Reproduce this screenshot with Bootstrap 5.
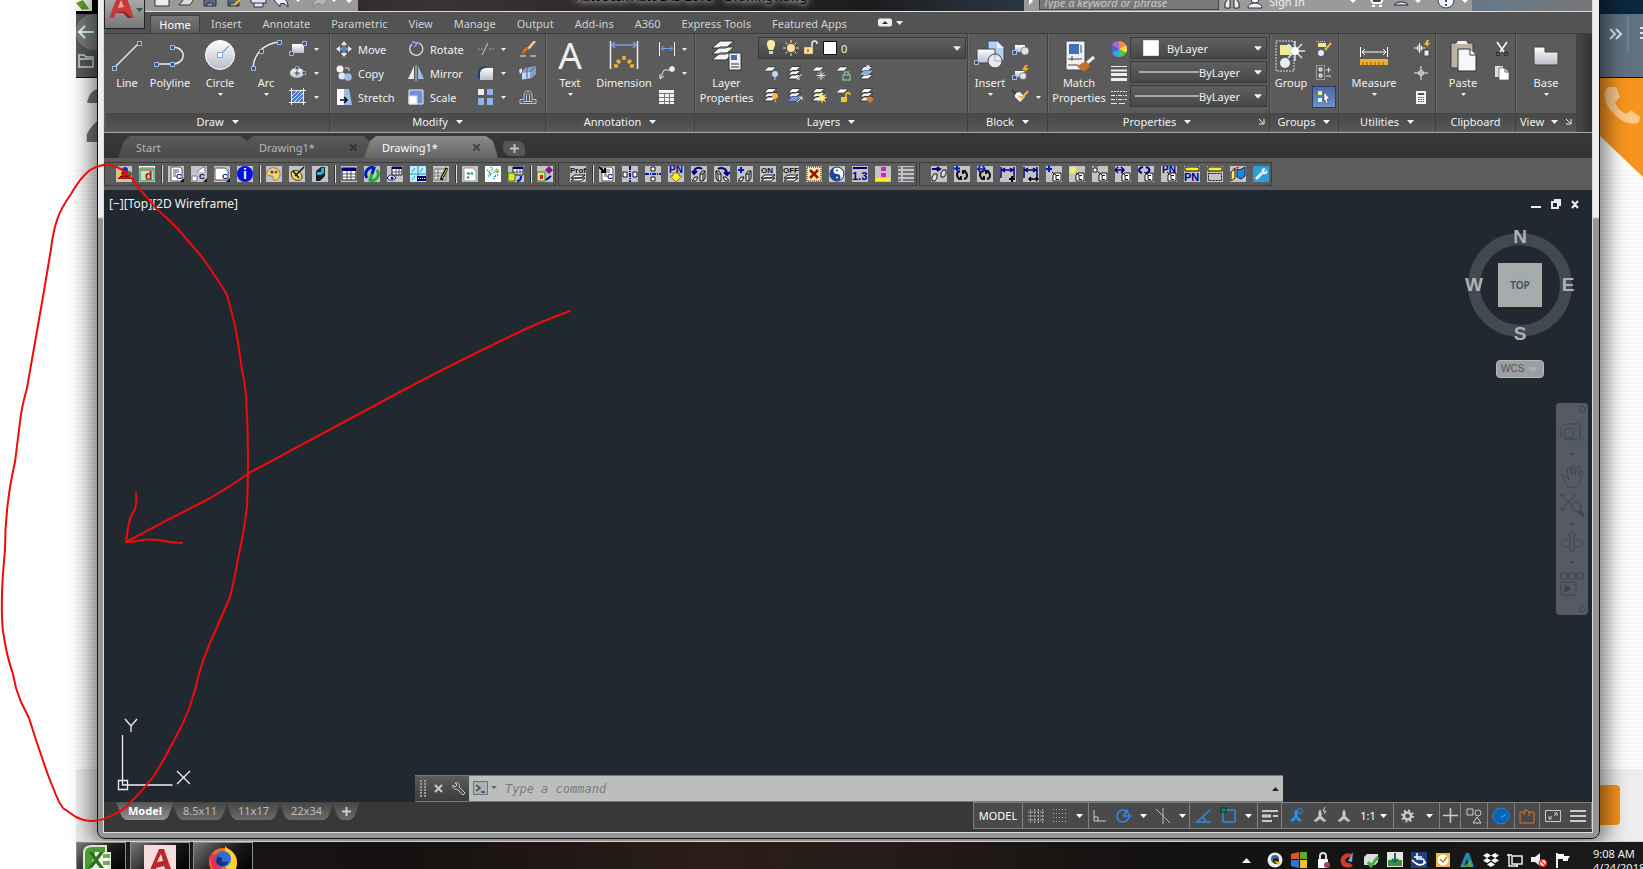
<!DOCTYPE html>
<html lang="en">
<head>
<meta charset="utf-8">
<title>Autodesk AutoCAD 2018 - Drawing1.dwg</title>
<meta name="viewport" content="width=device-width, initial-scale=1">
<link rel="stylesheet" href="https://cdn.jsdelivr.net/npm/bootstrap@5.3.0/dist/css/bootstrap.min.css">
<style>
:root{--ink:#f1f1f1;--canvas:#212830;--bar:#383838;--panel:#5b5b5b;--dark:#3d3d3d}
body{font:11px/15px "Noto Sans","Open Sans",sans-serif;color:var(--ink);background:#fff;height:100vh;overflow:hidden}
button{background:none;border:0;padding:0;color:inherit;font:inherit}
svg{display:block;flex:none}
select{appearance:none;border:0;background:transparent;color:inherit;font:inherit;min-width:0;padding:0}
select option{color:#222}
/* page behind the CAD window */
.backdrop{margin-left:76px;background:repeating-linear-gradient(#fff 0 2px,#f8f8f8 2px 4px)}
.bk-top{height:14px;background:linear-gradient(90deg,#000 0 40%,#0b2740 90%)}
.bk-nav{height:64px;background:linear-gradient(90deg,#5a5b5b 0 50%,#60717f 95%);border-bottom:1px solid #111}
.bk-page{height:90px;background:#fff;color:#777;font:700 78px/74px "Liberation Sans",sans-serif}
.bk-foot{height:72px;background:#ededed}
.peek{width:21px;overflow:hidden}
.corner{width:43px;height:99px;background:#f7941d;clip-path:polygon(0 0,100% 0,100% 100%,0 58px)}
.orange{width:40px;height:40px;background:#f7941d;border-radius:0 4px 4px 0;margin-right:23px}
.round-back{width:36px;height:36px;border-radius:50%;background:#7d7e7e}
/* the window */
.cad{position:absolute;left:21px;right:43px;top:-10px;bottom:2px;border:1px solid #111;border-radius:8px;background:linear-gradient(#eee 0 226px,#959595 228px);padding:9px 7px 6px 6px;box-shadow:0 0 22px 6px rgba(0,0,0,.55)}
.inner{background:var(--bar);outline:1px solid #ddd}
.head{height:33px;background:#535353}
.logo{width:41px;height:29px;background:linear-gradient(#aaa,#777);border:1px solid #222;border-top:0}
.titlebar{height:12px;background:linear-gradient(90deg,#1b1b1b,#3a3236 20%,#1c1c1e 50%,#27303a 58%,#6a7a86 94%,#777);border-bottom:1px solid #ddd;overflow:hidden}
.qat,.info{background:#9a9a9a;height:11px}
.titletext{color:#050505;font-size:12px;line-height:14px;margin-top:-10px;text-shadow:0 0 5px #ccc,0 0 8px #bbb,0 0 10px #aaa}
.kw{width:180px;height:14px;margin-top:-4px;border:1px solid #444;background:#787878;color:#ddd;font:italic 11px/14px "Noto Sans",sans-serif;padding:0 3px}
.kw::placeholder{color:#c8c8c8;opacity:1}
.rtabs{height:21px;gap:1px}
.rtabs a{color:#d0d0d0;text-decoration:none;line-height:18px;margin-top:3px;padding:0 10px}
.rtabs a.active{color:#fff;background:linear-gradient(#777,#5c5c5c);border:1px solid var(--dark);border-bottom:0;width:50px;padding:0;text-align:center}
.ribbon{background:var(--panel);height:100px;border-top:1px solid var(--dark);border-bottom:1px solid #a5a5a5;padding-left:2px}
.rp{border-right:1px solid #414141;box-shadow:1px 0 #6a6a6a;flex:none}
.rp-body{height:79px;padding-top:3px;flex:none}
.rp-title{height:17px;background:linear-gradient(#484848,#555)}
.rest{background:linear-gradient(90deg,#474747,#333)}
.big{padding-top:3px;display:flex;flex-direction:column;align-items:center;flex:none;line-height:15px}
.big svg:first-child{margin-bottom:3px;overflow:visible}
.big .car{margin-top:3px}
.row24{height:24px;display:flex;align-items:center}
.split{gap:6px}
.sm{display:flex;align-items:center;gap:6px;height:22px}
.combo{border:1px solid #3a3a3a;background:linear-gradient(#5f5f5f,#484848);height:22px;display:flex;align-items:center;padding:0 4px}
.hot{width:24px;height:22px;background:linear-gradient(#4a6aa5,#6d92cf);border:1px solid #2a3d66}
.ftabs{height:25px;background:linear-gradient(#383838,#333);padding-left:14px}
.ft{height:22px;width:134px;margin-right:-11px;margin-top:3px;padding:0 18px 0 18px;background:linear-gradient(#5a5a5a,#4a4a4a);clip-path:polygon(12px 0,calc(100% - 12px) 0,calc(100% - 5px) 5px,100% 100%,0 100%,6px 5px);color:#b5b5b5}
.ft.active{background:linear-gradient(#8a8a8a,#666);color:#fff;position:relative}
.plus{width:22px;height:15px;background:#565656;border-radius:4px 8px 2px 8px}
.tools{height:32px;background:#5c5c5c;padding-top:4px}
.tbox{height:24px;border:1px solid #3c3c3c;padding:0 2px 0 11px;gap:7px;align-items:center;display:flex;margin-right:2px}
.tbox button{width:16px;height:16px;background:#c3c3c3;color:#000}
.vl{width:2px;height:18px;background:#ddd;border-left:1px solid #333;margin:0 -2px 0 -1px}
.canvas{background:var(--canvas);position:relative}
.vp{padding:6px 12px 0 5px;font-size:12px}
.cube{position:absolute;right:16px;top:36px;width:112px}
.wcs{width:48px;height:18px;background:#9b9ea3;border:1px solid #b5b8bb;border-radius:4px;color:#555;font:10px/14px "Liberation Sans",sans-serif;padding-left:4px;margin-top:14px}
.navwrap{position:absolute;right:4px;top:213px;width:32px;height:212px;background:#565b61;border-radius:4px;color:#3f444a}
.cmd{position:absolute;left:20.9%;right:20.75%;bottom:0;height:27px;background:#bcbebe;border-top:1px solid #777;border-bottom:1px solid #777}
.cmd-grip{width:54px;background:linear-gradient(#5c5c5c,#3c3c3c);padding-left:5px}
.cmd input{border:0;background:none;font:italic 12px/24px "DejaVu Sans Mono",monospace;color:#444;outline:0;padding:0}
.cmd input::placeholder{color:#797b7b;opacity:1}
.bottom{height:30px;background:var(--bar)}
.lt{height:18px;background:linear-gradient(#454545,#6a6a6a);color:#bbb;clip-path:polygon(0 0,100% 0,calc(100% - 6px) 85%,calc(100% - 10px) 100%,10px 100%,6px 85%);line-height:16px;text-align:center;margin-left:-2px}
.lt.active{background:linear-gradient(#555,#929292);color:#fff;font-weight:700}
.sb{border:1px solid #808080;height:27px;background:#4a4a4a;display:flex;align-items:center;justify-content:center;color:#c4c4c4;margin-left:-1px}
.taskbar{height:28px;margin-left:76px;border-top:1px solid #c5d5de;background:linear-gradient(90deg,#1c1a19,#141110 20%,#2b1d18 40%,#271c1a 50%,#121110 70%,#1a1a1a)}
.app{height:28px;border:1px solid #8c8c8c;border-bottom:0;background:linear-gradient(135deg,#777,#1a1a1a 55%,#000);display:flex;justify-content:center;align-items:flex-start;padding-top:2px}
.clock{width:50px;line-height:14px;padding-top:5px;white-space:nowrap}
.redline{position:absolute;left:0;top:0;pointer-events:none}
</style>
</head>
<body>
<svg width="0" height="0" class="position-absolute">
<defs>
<linearGradient id="gw" x2="0" y2="1"><stop stop-color="#fff"/><stop offset="1" stop-color="#b9bcc8"/></linearGradient>
</defs>
<symbol id="car" viewBox="0 0 7 4"><path d="M0 0h7L3.500 4z" fill="currentColor"/></symbol>
<symbol id="nd" viewBox="0 0 5 5"><path d="M.5.5h4v4h-4z" fill="#46526b" stroke="#9dbbf0"/></symbol>
<symbol id="sheet" viewBox="0 0 16 16"><path d="M5 2h8L9 6H1z" fill="#fff" stroke="#333" stroke-width=".7"/></symbol>
<symbol id="stack" viewBox="0 0 16 16"><path d="M5 9.500h9L9 14H1zM5 5.500h9L9 10H1zM5 1.500h9L9 6H1z" fill="#f4f4f4" stroke="#3a3a3a"/></symbol>
<symbol id="person" viewBox="0 0 16 16"><path d="M8 1l1.800 4-.3 3 5 5-3 .8L8 11l-3.500 2.800-3-.8 5-5-.3-3z" fill="currentColor"/></symbol>
<symbol id="tag" viewBox="0 0 16 16"><path d="M7 9l2-2h6v8H7z" fill="#fff" stroke="#111"/><path d="M13 9.500h-3v4h3M6 6l4 3" fill="none" stroke="#111"/></symbol>
<symbol id="rot" viewBox="0 0 16 16"><path d="M6 5C2 6 2 11 6 13M4 13h3v-3M10 13c4-1 4-6 0-8M12 5H9v3" fill="none" stroke="#111" stroke-width="2"/></symbol>
<symbol id="beam" viewBox="0 0 16 16"><path d="M9 8l2-3h3v7l-2 3H9zM9 8h3v7M12 8l2-3M1 15l3-4h3l-2 4z" fill="#ddd" stroke="#111"/></symbol>
</svg>

<div class="vh-100 d-flex flex-column position-relative">
  <div class="backdrop flex-grow-1 d-flex flex-column position-relative">
    <div class="bk-top"><svg width="16" height="11"><path fill="#fff" d="M0 0h16v11H0z"/><path fill="#63a02c" d="M0 3l7-3 6 9-7 1z"/></svg></div>
    <div class="bk-nav d-flex justify-content-between">
      <div>
        <div class="round-back d-flex align-items-center"><svg width="20" height="16" fill="none" stroke="#dff" stroke-width="2"><path d="M18 8H3M9 2L3 8l6 6"/></svg></div>
        <svg width="20" height="20" fill="none" stroke="#cfe0e4" stroke-width="1.500"><path d="M3 17V5h5l2 2h7v10zM3 9h14"/></svg>
      </div>
      <svg width="34" height="40" fill="none" stroke="#cfeaf2" stroke-width="2"><path d="M1 15l5 5-5 5M7 15l5 5-5 5"/><path d="M19 3v34" stroke="#8b99a3" stroke-width="1"/><path d="M31 14h3M31 19h3M31 24h3"/></svg>
    </div>
    <div class="bk-page d-flex justify-content-between"><span class="peek ps-2">2</span>
      <div class="corner"><svg width="43" height="60"><path d="M8 9c-6 5-4 16 5 26s20 13 26 9l1-5-9-7-5 4c-5-2-10-8-11-12l5-5-4-10z" fill="#fbc88a"/></svg></div>
    </div>
    <div class="bk-foot mt-auto d-flex justify-content-end align-items-center"><div class="orange"></div></div>

    <main class="cad d-flex">
      <div class="inner flex-grow-1 d-flex flex-column">
        <header class="head d-flex">
          <button class="logo flex-shrink-0 d-flex" aria-label="Application menu"><svg width="40" height="28"><path d="M4 18L13-5h8l8 23h-6l-3-7-9 2-2 5z" fill="#c93a37"/><path d="M13 8l3-8 3 7z" fill="#e9aaa7"/><path d="M10 13l9-2 8 7-4 0-5-5z" fill="#8d1d20"/><path d="M31 8h7l-3.500 4z" fill="#2e5b58"/></svg></button>
          <div class="flex-grow-1">
            <div class="titlebar d-flex justify-content-between">
              <div class="qat d-flex align-items-start ps-2" style="width:213px">
                <svg width="204" height="10" fill="none" stroke="#333"><path d="M2-3v9h14v-9" fill="#eee"/><path d="M26 5l5-6h10l-4 6z" fill="#ddd"/><path d="M51-3v9h12v-9zM54 6V3h6v3" fill="#556b88"/><path d="M75-3v9h11v-9zM77 6V3h5v3" fill="#556b88"/><path d="M81 5l6-5" stroke="#f0c030" stroke-width="2"/><path d="M98-1h15v4H98zM101 3v4h9V3" fill="#dde6f5"/><path d="M121 0l6-6v4c5 0 8 3 8 9-3-4-5-4-8-3v3z" fill="#e8f0ff"/><path d="M174 0l-6-6v4c-5 0-8 3-8 9 3-4 5-4 8-3v3z" fill="#b5b5b5" stroke="#888"/><path d="M142-1h6l-3 3zM178-1h6l-3 3zM192-1h8l-4 4z" fill="#fff" stroke="none"/></svg>
              </div>
              <div class="titletext">Autodesk AutoCAD 2018 &nbsp;&nbsp; Drawing1.dwg</div>
              <div class="d-flex">
              <div class="info d-flex align-items-start" style="width:448px">
                <svg width="15" height="10"><path d="M5-3v8l4-4z" fill="#fff"/></svg>
                <input class="kw" aria-label="Search" placeholder="Type a keyword or phrase">
                <svg width="50" height="10"><path d="M6 8V3l3-4h2v9zM20 8V3l-3-4h-2v9z" fill="#eee" stroke="#222"/><path d="M29 8c0-4 5-5 7-5s7 1 7 5z" fill="#eef" stroke="#333"/><circle cx="36" cy="-1" r="4" fill="#fff" stroke="#333"/></svg>
                <span style="margin-top:-6px">Sign In</span>
                <svg width="158" height="10" class="ms-auto"><path d="M36 0h6l-3 3zM101 0h6l-3 3zM148 0h6l-3 3z" fill="#fff"/><path d="M56-2l3 5h8l2-5zM58 6h3M65 6h3" stroke="#fff" stroke-width="2" fill="#445"/><path d="M80 5c3-4 12-4 14 0zM83-1h7" fill="#dde6f5" stroke="#223"/><circle cx="132" cy="0" r="8" fill="#f5f5f5" stroke="#345"/><path d="M132 4v2M132-2v4" stroke="#24508f" stroke-width="2"/></svg>
              </div>
              <div style="width:120px"></div>
              </div>
            </div>
            <nav class="rtabs d-flex" style="padding-left:5px" aria-label="Ribbon tabs">
              <a href="#" class="active">Home</a><a href="#">Insert</a><a href="#">Annotate</a><a href="#">Parametric</a><a href="#">View</a><a href="#">Manage</a><a href="#">Output</a><a href="#">Add-ins</a><a href="#">A360</a><a href="#">Express Tools</a><a href="#">Featured Apps</a>
              <button class="ms-3 ps-1 d-flex align-items-center gap-1" aria-label="Minimize ribbon"><svg width="14" height="9"><rect width="14" height="8" y=".5" rx="2" fill="#eee"/><path d="M4 6l3-3 3 3z" fill="#333"/></svg><svg width="7" height="4"><use href="#car"/></svg></button>
            </nav>
          </div>
        </header>

        <section class="ribbon d-flex">
          <!-- Draw -->
          <div class="rp" style="width:224px">
            <div class="rp-body d-flex">
              <button class="big" style="width:42px"><svg width="32" height="32"><path d="M3 28L28 3" stroke="#eee" stroke-width="1.500"/><use href="#nd" x="1" y="26" width="5" height="5"/><use href="#nd" x="26" y="1" width="5" height="5"/></svg>Line</button>
              <button class="big" style="width:44px"><svg width="32" height="32" fill="none"><path d="M2 24h16c15 0 15-17 0-17" stroke="#eee" stroke-width="1.500"/><use href="#nd" x="0" y="22" width="5" height="5"/><use href="#nd" x="16" y="22" width="5" height="5"/><use href="#nd" x="16" y="5" width="5" height="5"/></svg>Polyline</button>
              <button class="big" style="width:56px"><svg width="32" height="32"><circle cx="16" cy="15" r="14.500" fill="url(#gw)" stroke="#fff"/><path d="M16 15l9-9" stroke="#79a3e8" stroke-width="1.500"/><path d="M13.500 12.500h5v5h-5z" fill="#fff" stroke="#79a3e8"/></svg>Circle<svg class="car" width="5" height="3"><use href="#car"/></svg></button>
              <button class="big" style="width:36px"><svg width="32" height="32" fill="none"><path d="M3 28C4 14 13 4 29 2" stroke="#eee" stroke-width="1.500"/><use href="#nd" x="1" y="26" width="5" height="5"/><use href="#nd" x="9" y="9" width="5" height="5"/><use href="#nd" x="27" y="0" width="5" height="5"/></svg>Arc<svg class="car" width="5" height="3"><use href="#car"/></svg></button>
              <div class="ms-1">
                <button class="row24 split" aria-label="Rectangle"><svg width="20" height="16"><path d="M4 3h12v9H4z" fill="url(#gw)"/><use href="#nd" x="14" y="0" width="5" height="5"/><use href="#nd" x="1" y="10" width="5" height="5"/></svg><svg width="5" height="3"><use href="#car"/></svg></button>
                <button class="row24 split" aria-label="Ellipse"><svg width="20" height="16"><ellipse cx="9" cy="8" rx="7" ry="5" fill="url(#gw)"/><path d="M9 5.500v5M6.500 8h5" stroke="#345"/><use href="#nd" x="7" y="1" width="4" height="4"/><use href="#nd" x="14" y="6" width="4" height="4"/></svg><svg width="5" height="3"><use href="#car"/></svg></button>
                <button class="row24 split" aria-label="Hatch"><svg width="20" height="18"><path d="M4 3h11v11H4z" fill="#4e78c6"/><path d="M4 8l5-5M4 12l9-9M6 14l9-9M10 14l5-5" stroke="#dbe8ff"/><path d="M1 2.500h17M1 14.500h17M3.500 0v17M15.500 0v17" stroke="#eee"/></svg><svg width="5" height="3"><use href="#car"/></svg></button>
              </div>
            </div>
            <button class="rp-title w-100 d-flex justify-content-center align-items-center gap-2">Draw <svg width="7" height="4"><use href="#car"/></svg></button>
          </div>
          <!-- Modify -->
          <div class="rp" style="width:216px">
            <div class="rp-body d-flex" style="padding-left:6px">
              <div style="width:72px">
                <div class="row24"><button class="sm"><svg width="16" height="16" fill="#eee"><path d="M8 0l3 4H5zM8 16l3-4H5zM0 8l4-3v6zM16 8l-4-3v6z"/><path d="M8 3v10M3 8h10" stroke="#9cf"/><path d="M6 6h4v4H6z" fill="#5b7fc0"/></svg>Move</button></div>
                <div class="row24"><button class="sm"><svg width="16" height="16"><circle cx="4" cy="4" r="3.500" fill="#f4f4f4"/><circle cx="6" cy="11" r="3.500" fill="#dce6f8"/><circle cx="12" cy="12" r="3.800" fill="#9dbbe8"/><path d="M9 3h4v3" fill="none" stroke="#ddd"/></svg>Copy</button></div>
                <div class="row24"><button class="sm"><svg width="16" height="16"><path d="M8 0h5l3 16H8z" fill="#9dbbe8"/><path d="M1 0h7v16H1z" fill="#fff"/><path d="M4 11h7M8 8l3 3-3 3" stroke="#000" fill="none" stroke-width="1.500"/></svg>Stretch</button></div>
              </div>
              <div style="width:69px">
                <div class="row24"><button class="sm"><svg width="16" height="16" fill="none" stroke="#ddd" stroke-width="1.300"><path d="M4 3a6.500 6.500 0 1 0 7-1"/><path d="M4 1l6 1-4 4" stroke="#8ab0f0"/></svg>Rotate</button></div>
                <div class="row24"><button class="sm"><svg width="16" height="16"><path d="M6 1v13H0z" fill="#e8e8e8"/><path d="M10 1v13h6z" fill="#9dbbe8"/><path d="M8 0v16" stroke="#ccc"/></svg>Mirror</button></div>
                <div class="row24"><button class="sm"><svg width="16" height="16"><path d="M1 1h14v14H1z" fill="#6d93d6" stroke="#eee"/><path d="M1 7h8v8H1z" fill="#fff" stroke="#cfd9ee"/></svg>Scale</button></div>
              </div>
              <div style="width:42px">
                <button class="row24 split" aria-label="Trim"><svg width="18" height="16" fill="none" stroke="#7aa2e6"><path d="M1 8h5M12 8h5" stroke-dasharray="2 1"/><path d="M5 14l6-12" stroke="#ccc"/></svg><svg width="5" height="3"><use href="#car"/></svg></button>
                <button class="row24 split" aria-label="Fillet"><svg width="18" height="16"><path d="M3 15V9c0-4 3-6 6-6h7v12z" fill="url(#gw)"/><path d="M2 14V8c0-4 3-6 7-6" fill="none" stroke="#24426e" stroke-width="2"/></svg><svg width="5" height="3"><use href="#car"/></svg></button>
                <button class="row24 split" aria-label="Array"><svg width="18" height="16"><path d="M1 0h6v6H1z" fill="#eee"/><path d="M10 0h6v6h-6zM1 9h6v7H1zM10 9h6v7h-6z" fill="#8fb0ea"/></svg><svg width="5" height="3"><use href="#car"/></svg></button>
              </div>
              <div>
                <button class="row24" aria-label="Erase"><svg width="18" height="16"><path d="M1 15h6M11 15h6" stroke="#eee"/><path d="M16 0L9 8" stroke="#f7d27a" stroke-width="2.500"/><path d="M10 7l-7 7 1-5 3-3z" fill="#e2711d"/></svg></button>
                <button class="row24" aria-label="Explode"><svg width="18" height="16"><path d="M3 7l3-4 11-2v8l-4 4-10 2z" fill="#7fa2cf"/><path d="M3 8l8-1v6l-8 1z" fill="#c5d7ee"/><path d="M11 7l5-5M8 3v10" stroke="#4a5e7a"/><path d="M0 5l3-2v4l-2 2z" fill="#dce8f8"/></svg></button>
                <button class="row24" aria-label="Offset"><svg width="18" height="16" fill="none" stroke="#a9c4f0"><path d="M1 14.500h16v-4h-4v-4c0-6-8-6-8 0v4H1zM4 12.500h10M7.500 12V6c0-2 3-2 3 0v6"/></svg></button>
              </div>
            </div>
            <button class="rp-title w-100 d-flex justify-content-center align-items-center gap-2">Modify <svg width="7" height="4"><use href="#car"/></svg></button>
          </div>
          <!-- Annotation -->
          <div class="rp" style="width:149px">
            <div class="rp-body d-flex">
              <button class="big" style="width:48px"><svg width="32" height="32"><text x="16" y="29" text-anchor="middle" font-size="37" font-family="Noto Sans" fill="#eee">A</text></svg>Text<svg class="car" width="5" height="3"><use href="#car"/></svg></button>
              <button class="big" style="width:60px"><svg width="32" height="32"><path d="M2.500 1v28M29.500 1v28" stroke="#eee" stroke-width="1.500"/><path d="M4 5h24M7 2L4 5l3 3M25 2l3 3-3 3" stroke="#74a0ea" stroke-width="1.500" fill="none"/><path d="M6 26h4M9 20l3 3M16 16v4M23 20l-3 3M22 26h4" stroke="#f0ac2c" stroke-width="3.500"/></svg>Dimension</button>
              <div class="ms-1">
                <button class="row24 split" aria-label="Linear dimension"><svg width="18" height="16" fill="none"><path d="M1.500 1v14M16.500 1v14" stroke="#eee"/><path d="M3 7.500h12M6 5L3 7.500 6 10M12 5l3 2.500-3 2.500" stroke="#74a0ea"/></svg><svg width="5" height="3"><use href="#car"/></svg></button>
                <button class="row24 split" aria-label="Leader"><svg width="18" height="16" fill="none" stroke="#ddd"><path d="M2 14L6 5h6M2 9v5l4-3"/><circle cx="14" cy="4" r="2.500" fill="#eee"/></svg><svg width="5" height="3"><use href="#car"/></svg></button>
                <button class="row24" aria-label="Table"><svg width="18" height="16"><path d="M1 1h15v14H1z" fill="#f2f2f2"/><path d="M1 4.500h15M1 8.500h15M1 12.500h15M6.500 4v11M11.500 4v11" stroke="#777"/></svg></button>
              </div>
            </div>
            <button class="rp-title w-100 d-flex justify-content-center align-items-center gap-2">Annotation <svg width="7" height="4"><use href="#car"/></svg></button>
          </div>
          <!-- Layers -->
          <div class="rp" style="width:273px">
            <div class="rp-body d-flex">
              <button class="big" style="width:63px"><svg width="32" height="32"><path d="M9 13h14l-8 7H1zM9 7h14l-8 7H1zM9 1h14l-8 7H1z" fill="#f4f4f4" stroke="#333"/><path d="M18 13h12v17H18z" fill="#eef1f5" stroke="#333"/><path d="M20 15h6v5h-6z" fill="#3f6fb5"/><path d="M20 24h8M20 27h8" stroke="#333"/></svg>Layer<br>Properties</button>
              <div>
                <div class="combo gap-1" style="width:208px">
                  <svg width="16" height="18"><path d="M8 1c5 0 5 5 2 10H6C3 6 3 1 8 1z" fill="#fde9a6"/><path d="M6 12h4v3H6z" fill="#d6d0bd"/></svg>
                  <svg width="16" height="16"><circle cx="8" cy="8" r="4" fill="#fbdf9c"/><path d="M8 0v3M8 13v3M0 8h3M13 8h3M2.500 2.500l2 2M11.500 11.500l2 2M13.500 2.500l-2 2M4.500 11.500l-2 2" stroke="#f3e3bd"/></svg>
                  <svg width="16" height="16"><path d="M1 7h9v7H1z" fill="#fbe3a0" stroke="#8a6a1a" stroke-width=".5"/><path d="M9 7V4c0-4 5-4 5 0" fill="none" stroke="#eee" stroke-width="1.500"/><path d="M5 9v3" stroke="#333"/></svg>
                  <svg width="14" height="14"><path d="M.5.5h13v13H.5z" fill="#fff" stroke="#111"/></svg>
                  <select class="flex-grow-1" aria-label="Layer"><option>0</option></select>
                  <svg width="8" height="5"><use href="#car"/></svg>
                </div>
                <div class="d-flex mt-1" style="gap:8px;padding-left:5px;height:20px">
                  <button aria-label="Off"><svg width="16" height="16"><use href="#sheet"/><circle cx="12" cy="9" r="3" fill="#bcd6f5"/><path d="M12 12v3" stroke="#bcd6f5"/></svg></button>
                  <button aria-label="Isolate"><svg width="16" height="16"><use href="#stack"/><path d="M15 9l-5 5M10 11v3h3" stroke="#eee" fill="none"/></svg></button>
                  <button aria-label="Freeze"><svg width="16" height="16"><use href="#sheet"/><path d="M10 6v9M5.500 10.500h9M7 7.500l6 6M13 7.500l-6 6" stroke="#cfe4ff"/></svg></button>
                  <button aria-label="Lock"><svg width="16" height="16"><use href="#sheet"/><path d="M8 10h7v5H8zM9.500 10V7h4v3" fill="none" stroke="#7fb49a" stroke-width="1.500"/></svg></button>
                  <button aria-label="Make current"><svg width="16" height="16"><use href="#stack"/><path d="M5 5.500h9L9 10H1z" fill="#8db0e8"/><circle cx="9" cy="2" r="2" fill="#cde"/></svg></button>
                </div>
                <div class="d-flex" style="gap:8px;padding:4px 0 0 5px">
                  <button aria-label="All on"><svg width="16" height="16"><use href="#stack"/><circle cx="12" cy="9" r="3" fill="#f7b43c"/><path d="M12 12v3" stroke="#f7b43c"/></svg></button>
                  <button aria-label="Unisolate"><svg width="16" height="16"><use href="#stack"/><path d="M5 9.500h9L9 14H1z" fill="#6e92da"/><path d="M10 15l5-5M12 10h3v3" stroke="#eee" fill="none"/></svg></button>
                  <button aria-label="Thaw all"><svg width="16" height="16"><use href="#stack"/><path d="M11 5v11M6 10.500h10M7 7l8 8M15 7l-8 8" stroke="#ffd93b"/><circle cx="11" cy="11" r="3" fill="#ffe97a"/></svg></button>
                  <button aria-label="Unlock"><svg width="16" height="16"><use href="#sheet"/><path d="M6 10h6v5H6z" fill="#f7c52c"/><path d="M11 10V8c0-3 4-3 4 0" fill="none" stroke="#f7c52c" stroke-width="1.500"/></svg></button>
                  <button aria-label="Match layer"><svg width="16" height="16"><use href="#stack"/><path d="M7 12l4-3 4 3-4 4z" fill="#d9772a"/></svg></button>
                </div>
              </div>
            </div>
            <button class="rp-title w-100 d-flex justify-content-center align-items-center gap-2">Layers <svg width="7" height="4"><use href="#car"/></svg></button>
          </div>
          <!-- Block -->
          <div class="rp" style="width:80px">
            <div class="rp-body d-flex">
              <button class="big" style="width:44px"><svg width="32" height="32"><path d="M14 1h9l7 7v13H14z" fill="#b3cdf3" stroke="#3b4a63"/><path d="M23 1v7h7" fill="#e8f1ff"/><path d="M3 9h18v14H3z" fill="url(#gw)" stroke="#444"/><circle cx="21" cy="21" r="7" fill="#e5e8ef" stroke="#444"/><path d="M21 21v-6M21 21h6" stroke="#aab"/><use href="#nd" x="0" y="20" width="5" height="5"/></svg>Insert<svg class="car" width="5" height="3"><use href="#car"/></svg></button>
              <div>
                <button class="row24" aria-label="Create block"><svg width="18" height="16"><path d="M3 4h10v7H3z" fill="url(#gw)"/><circle cx="13" cy="10" r="4" fill="#dde3ee" stroke="#555" stroke-width=".6"/><use href="#nd" x="0" y="9" width="5" height="5"/></svg></button>
                <button class="row24" aria-label="Edit block"><svg width="18" height="16"><path d="M3 6h9v6H3z" fill="url(#gw)"/><circle cx="11" cy="11" r="3.500" fill="#dde3ee" stroke="#555" stroke-width=".6"/><path d="M13 0l-3 5h3l-1 3 5-5h-3l2-3z" fill="#f6a62a"/><use href="#nd" x="0" y="10" width="5" height="5"/></svg></button>
                <button class="row24 split" aria-label="Edit attributes"><svg width="18" height="16"><path d="M3 4l5-1 5 5-5 5-5-5z" fill="#eee"/><path d="M16 2l-6 7-3-2" stroke="#e9b84e" stroke-width="2" fill="none"/><path d="M0 1l4 4" stroke="#111"/></svg><svg width="5" height="3"><use href="#car"/></svg></button>
              </div>
            </div>
            <button class="rp-title w-100 d-flex justify-content-center align-items-center gap-2">Block <svg width="7" height="4"><use href="#car"/></svg></button>
          </div>
          <!-- Properties -->
          <div class="rp" style="width:222px">
            <div class="rp-body d-flex">
              <button class="big" style="width:62px"><svg width="32" height="32"><path d="M3 1h19v29H3z" fill="#f0f1f4" stroke="#444"/><path d="M6 4h10v10H6z" fill="#3f6fb5"/><path d="M18 5v8M5 19h14M9 16v5M5 25h10" stroke="#444"/><path d="M31 17l-7 6" stroke="#eee" stroke-width="3"/><path d="M14 26l9-5 4 5-5 5c-3 1-5-2-8-5z" fill="#c46f24"/></svg>Match<br>Properties</button>
              <div style="width:20px;padding-left:1px">
                <div class="row24"><svg width="16" height="16"><circle cx="8" cy="8" r="7.500" fill="#d44"/><path d="M8 8L1 4a8 8 0 0 1 7-4z" fill="#a36bd0"/><path d="M8 8V0a8 8 0 0 1 7 4z" fill="#f18b3c"/><path d="M8 8l7-4a8 8 0 0 1 0 8z" fill="#f4e04b"/><path d="M8 8l7 4a8 8 0 0 1-7 4z" fill="#59c15a"/><path d="M8 8v8a8 8 0 0 1-7-4z" fill="#3aa6d8"/><path d="M8 8l-7 4V4z" fill="#4a63d8"/></svg></div>
                <div class="row24"><svg width="16" height="16" stroke="#eee"><path d="M0 1.500h16"/><path d="M0 5.500h16" stroke-width="2"/><path d="M0 9.500h16M0 14.500h16" stroke-width="3"/></svg></div>
                <div class="row24"><svg width="16" height="16" stroke="#e5e5e5"><path d="M0 2.500h16" stroke-dasharray="2 1"/><path d="M0 6.500h16M0 10.500h16" stroke-dasharray="4 1 1 1"/><path d="M0 14.500h16" stroke-dasharray="6 2"/></svg></div>
              </div>
              <div class="d-flex flex-column" style="width:137px;gap:2px">
                <div class="combo gap-2" style="padding-left:12px"><svg width="16" height="16"><path d="M.5.5h15v15H.5z" fill="#fff" stroke="#ddd"/></svg><select class="flex-grow-1" aria-label="Object color"><option>ByLayer</option></select><svg width="8" height="5"><use href="#car"/></svg></div>
                <div class="combo"  style="padding-left:8px"><svg width="60" height="2"><path d="M0 1h60" stroke="#fff"/></svg><select class="flex-grow-1" aria-label="Lineweight"><option>ByLayer</option></select><svg width="8" height="5"><use href="#car"/></svg></div>
                <div class="combo"><svg width="64" height="2"><path d="M0 1h64" stroke="#fff"/></svg><select class="flex-grow-1" aria-label="Linetype"><option>ByLayer</option></select><svg width="8" height="5"><use href="#car"/></svg></div>
              </div>
            </div>
            <button class="rp-title w-100 d-flex justify-content-center align-items-center gap-2"><span class="ms-auto ps-3">Properties</span> <svg width="7" height="4"><use href="#car"/></svg><svg class="ms-auto me-1" width="7" height="7"><path d="M1 1l4 4M6 1v5H1" stroke="#eee" fill="none"/></svg></button>
          </div>
          <!-- Groups -->
          <div class="rp" style="width:69px">
            <div class="rp-body d-flex">
              <button class="big" style="width:42px"><svg width="32" height="32"><path d="M1 1h18v30H1z" fill="none" stroke="#ddd" stroke-dasharray="2 1"/><path d="M5 5h11v10H5z" fill="#f0ec8e"/><circle cx="10" cy="23" r="5" fill="#e3eef8"/><path d="M20 1v20M10 11h20M13 4l14 14M27 4L13 18" stroke="#cfe6ff" stroke-width="1.500"/><circle cx="20" cy="11" r="4" fill="#fff"/></svg>Group</button>
              <div>
                <button class="row24 justify-content-center" style="width:24px" aria-label="Group edit"><svg width="16" height="16"><path d="M2 2h8v4H2z" fill="#f0ec8e"/><circle cx="5" cy="12" r="3" fill="#e3eef8"/><path d="M0 .5h9" stroke="#ccc" stroke-dasharray="1 1"/><path d="M15 2L9 9" stroke="#e8b64c" stroke-width="2"/></svg></button>
                <button class="row24 justify-content-center" style="width:24px" aria-label="Ungroup"><svg width="16" height="16" stroke="#ddd" fill="none"><path d="M.5.500h8v14h-8z" stroke-dasharray="1 1"/><path d="M3 3h3v3H3zM3 9h3v3H3z" fill="#9bc0ee"/><path d="M10 5h5M12.500 2.500v5M10 11h5"/></svg></button>
                <div class="row24"><button class="hot d-flex align-items-center justify-content-center" aria-label="Group selection"><svg width="14" height="16"><path d="M1 2h4v4H1z" fill="#f0ec8e"/><path d="M1 9h4v4H1z" fill="#dfe"/><path d="M7 3l6 7-3 0 1 4-2 1-1-4-1 1z" fill="#fff" stroke="#333" stroke-width=".6"/></svg></button></div>
              </div>
            </div>
            <button class="rp-title w-100 d-flex justify-content-center align-items-center gap-2">Groups <svg width="7" height="4"><use href="#car"/></svg></button>
          </div>
          <!-- Utilities -->
          <div class="rp" style="width:97px">
            <div class="rp-body d-flex">
              <button class="big" style="width:70px"><svg width="32" height="32"><path d="M2.500 7v10M29.500 7v10M4 12h24M7 9l-3 3 3 3M25 9l3 3-3 3" stroke="#fff" fill="none"/><path d="M2 19h28v6H2z" fill="#efb02d"/><path d="M5 22v3M9 22v3M13 22v3M17 22v3M21 22v3M25 22v3" stroke="#8d5e0c"/></svg>Measure<svg class="car" width="5" height="3"><use href="#car"/></svg></button>
              <div class="ms-1">
                <button class="row24" aria-label="Quick select"><svg width="18" height="18" fill="none" stroke="#eee"><path d="M1 8h11M6.500 3v10M4.500 6h4v4h-4z"/><path d="M11 10h5v6h-5z" fill="#eee" stroke="#444"/><path d="M14 0l-3 5h3l-1 3 4-5h-2l1-3z" fill="#f6b62a" stroke="none"/></svg></button>
                <button class="row24" aria-label="ID point"><svg width="16" height="16" fill="none" stroke="#eee"><path d="M1 8h14M8 1v14"/><circle cx="8" cy="8" r="2.500"/></svg></button>
                <button class="row24" aria-label="Calculator"><svg width="16" height="16"><path d="M3 2h10v13H3z" fill="#f2f2f2"/><path d="M5 4h6v2H5z" fill="#555"/><path d="M5 8.500h6M5 10.500h6M5 12.500h6" stroke="#555" stroke-dasharray="1.500 .8"/></svg></button>
              </div>
            </div>
            <button class="rp-title w-100 d-flex justify-content-center align-items-center gap-2">Utilities <svg width="7" height="4"><use href="#car"/></svg></button>
          </div>
          <!-- Clipboard -->
          <div class="rp" style="width:80px">
            <div class="rp-body d-flex">
              <button class="big" style="width:54px"><svg width="32" height="32"><path d="M4 3h22v25H4z" fill="#bdb2a4" stroke="#3d3a36"/><path d="M9 4l2-3h8l2 3z" fill="#f3f3f3"/><path d="M11 9h12l6 6v16H11z" fill="#f6f7fa" stroke="#333"/><path d="M23 9v6h6" fill="#fff" stroke="#333"/></svg>Paste<svg class="car" width="5" height="3"><use href="#car"/></svg></button>
              <div class="ms-1">
                <button class="row24" aria-label="Cut"><svg width="16" height="16" fill="none"><path d="M3 1l7 10M13 1L6 11" stroke="#fff" stroke-width="1.500"/><circle cx="4" cy="13" r="2" stroke="#222"/><circle cx="12" cy="13" r="2" stroke="#222"/></svg></button>
                <button class="row24" aria-label="Copy clip"><svg width="16" height="16"><path d="M1 1h8v11H1z" fill="#dcdcdc"/><path d="M5 3h6l4 4v8H5z" fill="#fff" stroke="#555" stroke-width=".7"/><path d="M11 3v4h4" fill="none" stroke="#555"/></svg></button>
              </div>
            </div>
            <div class="rp-title d-flex justify-content-center align-items-center">Clipboard</div>
          </div>
          <!-- View -->
          <div class="rp" style="width:61px">
            <div class="rp-body d-flex justify-content-center"><button class="big"><svg width="32" height="32"><path d="M4 7h11v5h13v13H4z" fill="url(#gw)" stroke="#444"/></svg>Base<svg class="car" width="5" height="3"><use href="#car"/></svg></button></div>
            <button class="rp-title w-100 d-flex justify-content-between align-items-center px-1">View <svg width="7" height="4"><use href="#car"/></svg><svg width="7" height="7"><path d="M1 1l4 4M6 1v5H1" stroke="#eee" fill="none"/></svg></button>
          </div>
          <div class="rest flex-grow-1"></div>
        </section>

        <nav class="ftabs d-flex" aria-label="Open drawings">
          <button class="ft text-start">Start</button>
          <button class="ft d-flex align-items-center justify-content-between">Drawing1*<svg width="7" height="7" stroke="#333" stroke-width="2"><path d="M0 0l7 7M7 0L0 7"/></svg></button>
          <button class="ft active d-flex align-items-center justify-content-between">Drawing1*<svg width="7" height="7" stroke="#444" stroke-width="2"><path d="M0 0l7 7M7 0L0 7"/></svg></button>
          <button class="plus mt-2 ms-3 d-flex align-items-center justify-content-center" aria-label="New drawing"><svg width="9" height="9" stroke="#bbb" stroke-width="2"><path d="M4.500 0v9M0 4.500h9"/></svg></button>
        </nav>

        <div class="tools d-flex" id="tools"></div>

        <section class="canvas flex-grow-1">
          <div class="vp d-flex justify-content-between">
            <span>[−][Top][2D Wireframe]</span>
            <svg width="50" height="16" fill="none" stroke="#e8ecf2" stroke-width="2"><path d="M1 11h10M22 6h6v6h-6zM24 4h6v6M42 5l6 7M48 5l-6 7"/></svg>
          </div>
          <div class="cube d-flex flex-column align-items-center">
            <svg width="112" height="120" font-family="Liberation Sans" font-weight="700" font-size="19" fill="#aeb2b6" text-anchor="middle"><circle cx="56" cy="59" r="46" fill="none" stroke="#424951" stroke-width="12"/><path d="M34 37h44v44H34z" fill="#a9abab"/><path d="M42 45h28v28H42z" fill="#a2abb0"/><text x="56" y="17">N</text><text x="56" y="114">S</text><text x="10" y="65">W</text><text x="104" y="65">E</text><text x="56" y="63" font-family="Noto Sans" font-size="10" font-weight="600" fill="#444a50">TOP</text></svg>
            <button class="wcs d-flex align-items-center gap-1">WCS <svg width="9" height="5" fill="none" stroke="#bcbfc4"><path d="M1 1h7L4.500 4z"/></svg></button>
          </div>
          <div class="navwrap">
            <svg width="32" height="212" fill="none" stroke="currentColor"><circle cx="26" cy="6" r="3"/><circle cx="13" cy="30" r="5"/><path d="M24 36H9c-8-4-6-15 4-15h11v14"/><text x="16" y="43" font-size="10" font-family="Liberation Sans" fill="#3f5870" stroke="none">2D</text><path d="M14 50h5l-2.500 3zM14 120h5l-2.500 3zM14 158h5l-2.500 3z" fill="#3f444a" stroke="none"/><path d="M5 72c4 2 5 11 7 12h8c4-4 6-10 7-16-2-1-3 3-4 5 0-4 2-9 0-10s-3 6-4 9c0-4 0-10-2-10s-1 7-1 10c-1-4-2-9-4-8s0 7 1 13c-3-3-4-7-8-5z"/><path d="M5 91l15 16M5 107l15-16M5 94v-3h4M16 91h4v3M5 104v3h4"/><circle cx="20" cy="104" r="5"/><path d="M23 108l5 5" stroke-width="3"/><path d="M14 148v-16h-2l4-4 4 4h-2v16zM12 136c-9 2-9 8 2 8M20 136c9 2 9 8-2 8"/><path d="M5 170h6v6H5zM13 170h6v6h-6zM21 170h6v6h-6zM5 179h15v13H5z"/><path d="M9 182v7l6-3.500z" fill="#3f444a"/><circle cx="26" cy="206" r="3"/></svg>
          </div>
          <svg width="80" height="80" class="position-absolute bottom-0 start-0" style="margin:0 0 10px 10px" fill="none" stroke="#f0f0f0"><path d="M11 7l6 7 6-7M17 14v6M8.500 23v50h50M4.500 68.500h9v9h-9zM63 59l13 13M76 59L63 72" stroke-width="1.300"/></svg>
          <div class="cmd d-flex align-items-stretch">
            <div class="cmd-grip d-flex align-items-center gap-2"><svg width="6" height="17"><path d="M1 0v17M5 0v17" stroke="#999" stroke-width="2" stroke-dasharray="2 1"/></svg><button aria-label="Close"><svg width="10" height="10" stroke="#ccc" stroke-width="2"><path d="M1 1l7 7M8 1L1 8"/></svg></button><button aria-label="Customize"><svg width="14" height="14" stroke="#ccc" fill="none"><path d="M1 3l2 2 2-2-2-2c4-1 5 2 4 4l6 6-2 2-6-6C3 8 0 6 1 3z"/></svg></button></div>
            <label class="d-flex align-items-center flex-grow-1 px-1"><svg width="28" height="15"><path d="M.5.5h14v13H.5z" fill="#aab0b8" stroke="#6d7276"/><path d="M3 4l4 3-4 3M8 11h4" stroke="#3d4145" fill="none" stroke-width="1.500"/><path d="M18 5h6l-3 3z" fill="#666"/></svg><input class="flex-grow-1 ms-1" placeholder="Type a command" aria-label="Command line"><svg width="7" height="4"><path d="M0 4h7L3.500 0z" fill="#222"/></svg></label>
          </div>
        </section>

        <footer class="bottom d-flex justify-content-between">
          <div class="d-flex" style="padding-left:14px"><button class="lt active" style="width:58px">Model</button><button class="lt" style="width:56px">8.5x11</button><button class="lt" style="width:55px">11x17</button><button class="lt" style="width:55px">22x34</button><button class="lt" style="width:28px" aria-label="New layout"><svg class="mx-auto" width="9" height="9" stroke="#ccc" stroke-width="2"><path d="M4.500 0v9M0 4.500h9"/></svg></button></div>
          <div class="d-flex">
            <button class="sb text-white" style="width:50px">MODEL</button>
            <div class="sb" style="width:67px;gap:8px"><svg width="16" height="16" stroke="#aaa"><path d="M2.500 1v14M6.500 1v14M10.500 1v14M14.500 1v14M0 4h16M0 8h16M0 12h16" stroke-dasharray="2 1"/></svg><svg width="16" height="16"><path d="M1 1.500h14M1 5.500h14M1 9.500h14M1 13.500h14" stroke="#aaa" stroke-dasharray="1 2"/></svg><svg width="7" height="4" class="text-white"><use href="#car"/></svg></div>
            <div class="sb" style="width:102px;gap:7px"><svg width="16" height="16" stroke="#ccc" fill="none"><path d="M2 2v11h12M2 9h4v4"/></svg><svg width="18" height="16" stroke="#2a8cf0" fill="none" stroke-width="1.500"><circle cx="8" cy="8" r="6"/><path d="M8 8h9M8 8l5-6"/></svg><svg width="7" height="4" class="text-white"><use href="#car"/></svg><svg width="18" height="18" stroke="#bbb" fill="none"><path d="M2 2l14 14M9 1v16"/></svg><svg width="7" height="4" class="text-white"><use href="#car"/></svg></div>
            <div class="sb" style="width:69px;gap:8px"><svg width="17" height="16" stroke="#2a8cf0" fill="none" stroke-width="1.500"><path d="M15 2L2 14h14M8 9l3 5"/></svg><svg width="17" height="17" fill="none"><path d="M3 3h12v12H3z" stroke="#2a8cf0" stroke-width="1.500"/><path d="M1 1h5v4H1z" fill="#0a3" stroke="#033"/></svg><svg width="7" height="4" class="text-white"><use href="#car"/></svg></div>
            <div class="sb" style="width:25px"><svg width="16" height="14" stroke="#ccc"><path d="M0 2h16M11 7h5M0 12h10" stroke-width="2"/><path d="M0 7h9" stroke-width="3"/></svg></div>
            <div class="sb" style="width:113px;gap:8px"><svg width="16" height="18" color="#2a8cf0"><use href="#person"/><circle cx="12" cy="4" r="2.500" fill="none" stroke="#2a8cf0"/></svg><svg width="16" height="18"><use href="#person"/><path d="M13 0l-2 4h3l-2 3" stroke="#ccc" fill="none"/></svg><svg width="16" height="18"><use href="#person"/></svg><button class="text-white">1:1</button><svg width="7" height="4" class="text-white" style="margin-left:-4px"><use href="#car"/></svg></div>
            <div class="sb" style="width:47px;gap:12px"><svg width="13" height="14" fill="none"><circle cx="6.500" cy="7" r="3.500" stroke="#ccc" stroke-width="2.500"/><circle cx="6.500" cy="7" r="5.500" stroke="#ccc" stroke-width="2" stroke-dasharray="2 2.300"/></svg><svg width="7" height="4" class="text-white"><use href="#car"/></svg></div>
            <div class="sb" style="width:22px"><svg width="15" height="15" stroke="#ccc" stroke-width="1.500"><path d="M7.500 0v15M0 7.500h15"/></svg></div>
            <div class="sb" style="width:28px"><svg width="16" height="16" stroke="#ccc" fill="none"><path d="M1 1h6v6H1zM7 15l4-6 4 6z"/><circle cx="12" cy="5" r="3"/></svg></div>
            <div class="sb" style="width:28px"><svg width="18" height="18"><circle cx="9" cy="9" r="8" fill="#0c62b5" stroke="#1c84e8"/><path d="M9 11l5-4" stroke="#5bb2ff"/></svg></div>
            <div class="sb" style="width:26px"><svg width="16" height="16" stroke="#e0722c" fill="none"><path d="M1 4h5V1l4 3h5v11H1zM5 4v3M10 4v4"/></svg></div>
            <div class="sb" style="width:53px;gap:8px"><svg width="17" height="14" stroke="#ccc" fill="none"><path d="M.5 1.500h15v11H.5zM4 10l3-3M4 7v3h3M12 4L9 7M9 4h3v3"/></svg><svg width="16" height="14" stroke="#ccc" stroke-width="2"><path d="M0 2h16M0 7h16M0 12h16"/></svg></div>
          </div>
        </footer>
      </div>
    </main>
  </div>

  <div class="taskbar d-flex flex-shrink-0 overflow-hidden position-relative">
    <button class="app justify-content-start ps-1" style="width:50px" aria-label="Excel"><svg width="34" height="30"><path d="M3 8c0-5 3-7 8-7h14v30H3z" fill="#4d9a35" stroke="#d6ecc9" stroke-width="2"/><path d="M14 7h16v22H8z" fill="#fff" opacity=".9"/><path d="M8 7l4 0 3 5 4-5h4l-6 8 6 8h-4l-4-5-4 5H7l6-8z" fill="#2c6e1c"/><path d="M22 9h7v4h-7zM22 16h7v4h-7zM10 24h7v4h-7zM20 24h9v4h-9z" fill="#6fb04e"/></svg></button>
    <button class="app" style="width:60px;margin-left:4px" aria-label="AutoCAD"><svg width="32" height="28"><path fill="#f6dcd8" d="M0 0h32v28H0z"/><path d="M5 27L15 4h5l8 23h-6l-2-6-8 2-1 4z" fill="#b8282c"/><path d="M13 17l4-8 2 7z" fill="#f6dcd8"/></svg></button>
    <button class="app" style="width:60px;margin-left:3px" aria-label="Firefox"><svg width="32" height="30"><circle cx="16" cy="17" r="14" fill="#ff6a1a"/><path d="M18 1c2 3 12 6 12 17 0 5-2 8-4 10l-8-6z" fill="#ffd22e"/><path d="M4 9l8 1 4 10-3 8c-6-1-12-8-9-19z" fill="#f02c52"/><circle cx="16" cy="14" r="8" fill="#2b6fd6"/><path d="M10 12c3-1 6 1 5 3s3 3 6 1c-1 6-9 7-12 1z" fill="#1b2f7a"/></svg></button>
    <div class="ms-auto d-flex align-items-center" style="gap:8px;padding-top:9px;margin-right:22px">
      <svg width="9" height="5" class="me-2"><path d="M0 5h9L4.500 0z" fill="#eee"/></svg>
      <svg width="16" height="16"><circle cx="8" cy="8" r="7.500" fill="#e9eef5"/><circle cx="8" cy="7" r="4" fill="#3e6a8c"/><circle cx="9" cy="9" r="3" fill="#222"/><path d="M7 9l4 4 3-3z" fill="#f3b718"/></svg>
      <svg width="16" height="16"><path fill="#e84e2c" d="M0 2l8-2v7H0z"/><path fill="#5aad2f" d="M9 0h7v7H9z"/><path fill="#2c77d6" d="M0 8h8v8l-8-2z"/><path fill="#f4c21c" d="M9 8h7v8H9z"/></svg>
      <svg width="16" height="16"><path d="M3 7h10v9H3z" fill="#fff"/><path d="M5 7V4c0-4 6-4 6 0v3" fill="none" stroke="#ddd" stroke-width="2"/><circle cx="12" cy="13" r="3" fill="#b33a5a"/></svg>
      <svg width="16" height="16"><path d="M14 2C6-1 0 5 2 11s10 5 12 3l-3-3c-6 1-7-5 0-6z" fill="#d43a2a"/><path d="M14 0l-5 9 4 1z" fill="#79a7d8"/></svg>
      <svg width="16" height="16"><path d="M1 5l3-3h11v8l-3 3H1z" fill="#ddd"/><path d="M5 10l3 4 7-9" fill="none" stroke="#3cb43c" stroke-width="3"/></svg>
      <svg width="16" height="16"><path d="M0 0h16v15H0z" fill="#dfe9df"/><path d="M1 8h14v6H1z" fill="#3f8f3a"/><path d="M8 1v9M5 7l3 3 3-3" stroke="#265" stroke-width="2" fill="none"/></svg>
      <svg width="16" height="16"><path d="M0 0h16v16H0z" fill="#1e3f86"/><path d="M6 1v6h6c3 3 0 6-3 6s-5-2-5-3M1 8c3 4 10 7 14 2M3 5h8" fill="none" stroke="#fff" stroke-width="1.500"/></svg>
      <svg width="16" height="16"><path d="M1 1h14v14H1z" fill="#f5b73d"/><circle cx="8" cy="8" r="5.500" fill="#fff"/><path d="M5 7l3 3 4-5" stroke="#c98010" stroke-width="1.500" fill="none"/></svg>
      <svg width="16" height="16"><path d="M7 1h3l5 14h-4L8 7l-3 8H1z" fill="#1c8bb5"/><path d="M1 15c5-1 9-4 10-7l2 7z" fill="#7cc243" opacity=".7"/></svg>
      <svg width="16" height="16" fill="#fff"><path d="M4 1l4 2.500L4 6 0 3.500zM12 1l4 2.500L12 6 8 3.500zM4 6l4 2.500L4 11 0 8.500zM12 6l4 2.500-4 2.500-4-2.500zM8 10l4 2.500L8 15l-4-2.500z"/></svg>
      <svg width="16" height="16" fill="none" stroke="#eee" stroke-width="1.500"><path d="M5 4h10v8H5zM2 2v5M0 3h5M2 7v7h9M10 12v3"/></svg>
      <svg width="16" height="16"><path d="M0 5h4l5-4v13l-5-4H0z" fill="#eee"/><circle cx="12" cy="11" r="3.500" fill="#fff" stroke="#d22" stroke-width="1.500"/><path d="M10 9l4 4" stroke="#d22" stroke-width="1.500"/></svg>
      <svg width="16" height="16"><path d="M2 1v15" stroke="#eee" stroke-width="2"/><path d="M3 2h6v2h6l-2 3 0 2H8V7H3z" fill="#fff"/></svg>
    </div>
    <div class="clock flex-shrink-0">9:08 AM<br>4/24/2018</div>
  </div>

  <!-- freehand mark-up drawn over the desktop -->
  <svg class="redline" width="1643" height="869" fill="none" stroke="#f00b0b" stroke-width="2" stroke-linejoin="round" stroke-linecap="round">
    <path d="M103 165Q97 166 90 170Q80 178 71 194Q61 208 57 220Q53 232 51 249L44 291L34 348L27 388Q23 402 21 414L15 462Q10 484 8 502Q5 525 5 550Q1 590 2 617Q2 630 5 643Q8 660 13 674L16 688L21 702L29 718L36 740L48 775L56 795Q59 803 63 808Q70 813 76 817Q84 821 92 821Q103 821 115 814Q124 810 132 801Q144 789 153 777Q163 762 172 744Q182 727 189 709Q195 692 199 674Q205 653 214 634L230 597Q235 578 238 559Q244 533 247 507Q248 482 248 458Q248 426 246 396Q245 383 242 370L238 342L235 326Q231 309 227 295Q221 284 215 276Q208 265 201 256Q190 243 176 227L155 207L138 187Q129 173 119 168Q111 164 103 165"/>
    <path d="M570 311Q539 322 509 337Q446 367 383 401Q314 438 249 473Q227 489 203 502Q165 521 126 542M136 493Q137 502 135 509Q129 519 128 528L126 542Q134 542 142 540Q150 539 159 540Q171 543 182 543"/>
  </svg>
</div>

<script>
// Add-on toolbars: each entry is [label, svg markup on a 16 by 16 grid]; '|' is a divider.
const t=(s,x,y,z,c='#000080')=>`<text x="${x}" y="${y}" font-size="${z}" font-weight="700" font-family="Liberation Sans" fill="${c}">${s}</text>`;
const u=(n,e='')=>`<use href="#${n}" width="16" height="16" ${e}/>`;
const corner='<path d="M16 12v4h-4z" fill="#111"/>';
const cpage='<path d="M3 1h9l2 2v12H3z" fill="#fff" stroke="#555"/><path d="M5 4h6M5 6h6M5 8h3M5 10h3" stroke="#555"/>'+t('C',8,13,8);
const grid='<path d="M1 2h14v12H1z" fill="#fff" stroke="#111"/><path d="M1 2h14v3H1z" fill="#000080"/><path d="M1 8h14M1 11h14M6 5v9M10 5v9" stroke="#555"/>';
const minigrid='<path d="M5 1h10v8H5z" fill="#fff" stroke="#111"/><path d="M5 1h10v2H5z" fill="#000080"/><path d="M5 6h10M9 3v6M12 3v6" stroke="#555"/>';
const sheet3='<path d="M5 12h10l-4 3H1zM5 9h10l-4 3H1z" fill="#fff" stroke="#111"/>';
const dim='<path d="M1 1v11M14 1v11M2 4h11M5 2L2 4l3 2M10 2l3 2-3 2" stroke="#000080" stroke-width="1.500" fill="none"/>';
const sets=[
 [['Components','<path d="M3 2h4v4H3z" fill="#e8e020"/><circle cx="9" cy="4" r="3" fill="#1030d0"/><circle cx="4" cy="9" r="3" fill="#e0d020"/><circle cx="13" cy="8" r="3" fill="#109030"/><path d="M6 6h5v5H6zM2 13l3-3 3 3 3-3 3 3" fill="#d01010" stroke="#700"/>'],
  ['Drawing setup','<path d="M0 0h16v16H0z" fill="#fff"/><path d="M1 2h14v13H1z" fill="#bfe3bf" stroke="#185"/><path d="M2 4h12" stroke="#c22"/>'+t('d',6,14,12,'#b01010')],'|',
  ['Page list',cpage+corner],['Shape','<path d="M1 10h5v5H1zM6 6l6-5h2v5" fill="#fff" stroke="#777"/>'+t('C',8,13,8)+corner],['Sheet','<path d="M1 2h10l3 3v9H1z" fill="#fff" stroke="#555"/>'+t('C',8,13,8)+corner],
  ['Information','<circle cx="8" cy="8" r="8" fill="#0010e8"/>'+t('i',6,13,14,'#fff')],'|',
  ['Palette','<path d="M2 4c5-5 13-1 12 5s-7 6-7 4 1-3-2-3-6-2-3-6z" fill="#f3d95c" stroke="#876"/><circle cx="6" cy="6" r="1.500" fill="#33c"/><circle cx="10" cy="6" r="1.500" fill="#c33"/>'],
  ['Brush','<path d="M2 6c5-4 11 0 11 5s-8 4-10 0z" fill="#f3d95c" stroke="#432"/><path d="M15 1L6 10M4 5l6 7" stroke="#111" stroke-width="1.500"/>'],
  ['Door','<path d="M4 5l5-4h4v9l-5 5H4z" fill="#123"/><path d="M5 6h4v3H5zM9 3l3-2v6L9 9z" fill="#28b4c8"/>'],'|',
  ['Table',grid],['Refresh','<path d="M3 12C-1 6 5 0 10 2L8 8" fill="none" stroke="#0018c0" stroke-width="3"/><path d="M13 4c4 6-2 12-7 10l2-6" fill="none" stroke="#18b030" stroke-width="3"/>'],
  ['View table',minigrid+'<path d="M0 12c3-4 6-4 9 0-3 3-6 3-9 0z" fill="#fff" stroke="#000080"/><circle cx="5" cy="12" r="1.500" fill="#000080"/>'],
  ['Windows','<path d="M0 0h16v16H0z" fill="#bfefff"/><path d="M8 0v16M0 8h16M2 6l3-4M10 6l3-4M2 14l3-4" stroke="#2090c8"/><path d="M7 10h9v5H7z" fill="#000080"/><path d="M8 12.500h7" stroke="#fff" stroke-dasharray="1 1"/>'],
  ['Edit table','<path d="M1 3h12v11H1zM1 7h12M1 10h12M5 3v11" fill="#ddd" stroke="#777"/><path d="M14 2L8 14" stroke="#111" stroke-width="3"/><path d="M14 3L9 12" stroke="#f0d020"/>'],'|',
  ['Page preview','<path d="M2 2h9l3 3v10H2z" fill="#fff" stroke="#999"/><path d="M5 7l3 1M9 7l2 1M5 11l2 1" stroke="#2a9a6a" stroke-width="2"/>'],
  ['Plants','<path d="M0 0h16v16H0z" fill="#fff"/><path d="M2 4l3 2M6 1l2 4M12 3l-3 4M3 10l4-2M9 13l1-4M13 9l-3 1" stroke="#20a0c0" stroke-width="2" stroke-dasharray="1 1"/><path d="M4 7l2 1M11 6l3-1" stroke="#70b030" stroke-width="2"/>'],
  ['Export table',minigrid+'<path d="M0 7h7v8H0z" fill="#f0e020" stroke="#183"/><path d="M9 15c4 0 4-3 4-5" stroke="#0018c0" stroke-width="2" fill="none"/>'],'|',
  ['Export block','<path d="M12 0l4 4-4 4-4-4z" fill="#90108a"/><path d="M0 6h8v9H0z" fill="#e8e870" stroke="#183"/><path d="M3 9h3v4H3z" fill="#c22"/><path d="M9 14l5-4" stroke="#000080" stroke-width="2"/>']],
 [['Profile',t('Prof',0,7,8,'#111')+sheet3],'|',['To page',cpage+'<path d="M0 1l6 5M6 2v4H2" stroke="#000" stroke-width="2" fill="none"/>'],
  ['Align vertical','<path d="M1 6h4v5H1zM11 6h4v5h-4z" fill="#fff" stroke="#111"/><path d="M8 0v16" stroke="#0018c0" stroke-width="2" stroke-dasharray="4 1 1 1"/>'],
  ['Align horizontal','<path d="M6 1h4v4H6zM6 11h4v4H6z" fill="#fff" stroke="#111"/><path d="M0 8h16" stroke="#0018c0" stroke-width="2" stroke-dasharray="4 1 1 1"/>'],
  ['Part number',t('PN',1,7,10)+'<path d="M5 7h6v3h3l-6 6-6-6h3z" fill="#f8f020" stroke="#222" stroke-width=".5"/>'],
  ['Rotate left',u('beam')+'<path d="M3 7c0-6 6-6 8-4M1 5l2 3 3-3" stroke="#000080" stroke-width="2" fill="none"/>'],
  ['Rotate right',u('beam','transform="matrix(-1 0 0 1 16 0)"')+'<path d="M13 8c0-6-6-7-9-5M10 6l3 3 3-3" stroke="#000080" stroke-width="2" fill="none"/>'],
  ['Add beam',u('beam')+'<path d="M4 1v6M1 4h6" stroke="#0018c0" stroke-width="2"/>'],
  ['Layer on',t('ON',1,7,8,'#111')+sheet3],['Layer off',t('OFF',0,7,8,'#111')+sheet3],
  ['Delete','<path d="M1 1h14v14H1z" fill="#f8eaa0" stroke="#111" stroke-dasharray="1 1"/><path d="M4 4l8 8M12 4l-8 8" stroke="#a01010" stroke-width="2.500"/>'],
  ['Balance','<circle cx="8" cy="8" r="7" fill="#fff" stroke="#102060"/><path d="M8 1a7 7 0 0 0 0 14 3.500 3.500 0 0 0 0-7 3.500 3.500 0 0 1 0-7z" fill="#18489a"/><circle cx="8" cy="4.500" r="1" fill="#18489a"/><circle cx="8" cy="11.500" r="1" fill="#fff"/>'],
  ['Decimal','<path d="M1 2h14" stroke="#000080" stroke-width="2"/>'+t('1.3',0,14,11)],
  ['Highlight','<path d="M6 1h5v4H6zM6 7h5v4H6z" fill="#d818d8"/><path d="M1 12h14v3H1z" fill="#f8f020"/>'],
  ['List','<path d="M0 2h3M0 6h3M0 10h3M0 14h3M5 2h11M5 6h11M5 10h11M5 14h11" stroke="#556" stroke-width="1.500"/>']],
 [['Move beam','<path d="M1 3h8M6 1l3 2-3 2" stroke="#000080" stroke-width="2" fill="none"/><path d="M1 11l2-3h3v4l-2 3H1zM10 7l2-3h3v4l-2 3h-3z" fill="#ddd" stroke="#111"/>'],
  ['Add rotate',u('rot')+'<path d="M3 0v5M0 2.500h6" stroke="#0018c0" stroke-width="2"/>'],['Swap rotate',u('rot')+'<path d="M0 3h8M3 0L1 3l2 3M6 0l2 3-2 3" stroke="#0018c0" stroke-width="1.500" fill="none"/>'],
  ['Add dimension',dim+'<path d="M12 10v6M9 13h6" stroke="#000" stroke-width="2"/>'],['Stretch dimension',dim+'<path d="M6 13h9M8 11l-2 2 2 2M13 11l2 2-2 2" stroke="#000" stroke-width="1.500" fill="none"/>'],
  ['Add tag',u('tag')+'<path d="M3 0v6M0 3h6" stroke="#0018c0" stroke-width="2"/>'],['New tag',u('tag')+'<path d="M4 0v8M0 4h8M1 1l6 6M7 1L1 7" stroke="#f4f070" stroke-width="1.500"/>'],
  ['Link tag',u('tag')+'<path d="M1 2h4v4H1zM2 0h4" fill="#fff" stroke="#111"/>'],['Move tag',u('tag')+'<path d="M0 4h9M3 1L0 4l3 3M6 1l3 3-3 3" stroke="#000080" stroke-width="1.500" fill="none"/>'],
  ['Rotate tag',u('tag')+'<path d="M5 1C0 2 0 6 4 7M8 7c5-1 4-5 0-6" stroke="#000080" stroke-width="2" fill="none"/>'],['Number tag',u('tag')+t('PN',1,7,10)],
  ['Rename number','<path d="M1 1h14v4H1z" fill="#f8f020" stroke="#111"/>'+t('PN',0,15,11)],['Reserve number','<path d="M1 1h14v4H1z" fill="#f8f020" stroke="#111"/><path d="M1.500 7.500h13v7h-13z" fill="none" stroke="#111" stroke-dasharray="2 1"/>'],
  ['Catalog','<path d="M1 6l4-3v9l-4 3z" fill="#f8f070" stroke="#111"/><path d="M7 3l3 1 5-3v9l-4 3-4-2z" fill="#1c8be0" stroke="#123"/><path d="M3 3l6-2" stroke="#c22"/>'],
  ['Settings','<path d="M0 0h16v16H0z" fill="#2c9ed6"/><path d="M3 13l6-6" stroke="#e4eef5" stroke-width="3"/><path d="M9 7c-2-4 2-6 4-4l-2 2 1 1 2-2c2 3-2 6-5 3z" fill="#e4eef5"/>']]
];
document.getElementById('tools').innerHTML=sets.map(s=>'<div class="tbox">'+s.map(i=>i==='|'?'<span class="vl"></span>':`<button aria-label="${i[0]}"><svg width="16" height="16">${i[1]}</svg></button>`).join('')+'</div>').join('');
</script>
<script src="https://cdn.jsdelivr.net/npm/bootstrap@5.3.0/dist/js/bootstrap.bundle.min.js"></script>
</body>
</html>
